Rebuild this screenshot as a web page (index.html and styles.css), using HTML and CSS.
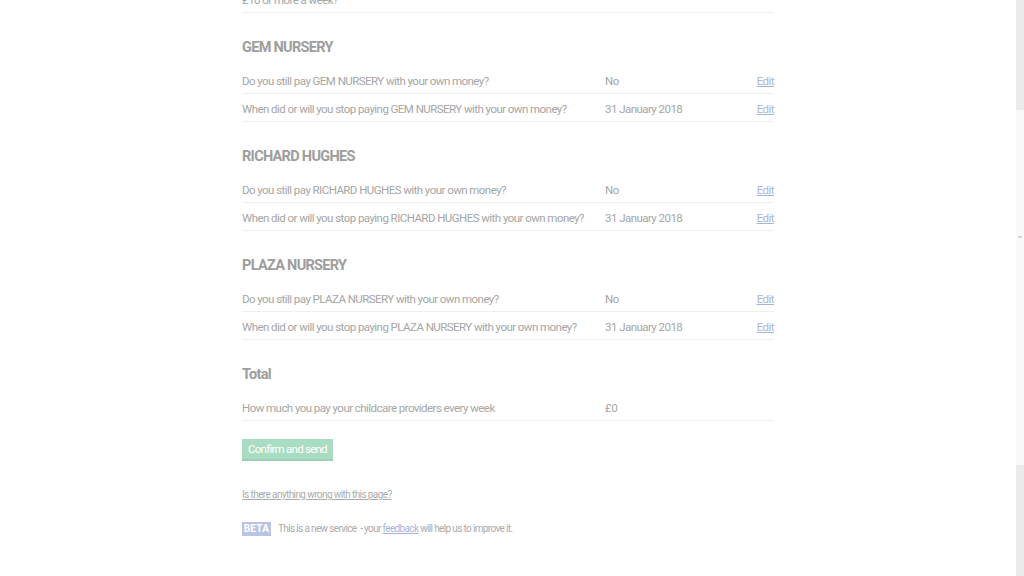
FILE: index.html
```html
<!DOCTYPE html>
<html lang="en">
<head>
<meta charset="utf-8">
<title>Check your answers</title>
<link rel="stylesheet" href="styles.css">
</head>
<body>
<div class="viewport">
  <main class="page">
    <dl class="list list-first">
      <div class="row row-cut">
        <dt class="key">£10 or more a week?</dt>
        <dd class="value"></dd>
        <dd class="action"></dd>
      </div>
    </dl>

    <section class="section">
      <h2 class="heading">GEM NURSERY</h2>
      <dl class="list">
        <div class="row">
          <dt class="key">Do you still pay GEM NURSERY with your own money?</dt>
          <dd class="value">No</dd>
          <dd class="action"><a href="#">Edit</a></dd>
        </div>
        <div class="row">
          <dt class="key">When did or will you stop paying GEM NURSERY with your own money?</dt>
          <dd class="value">31 January 2018</dd>
          <dd class="action"><a href="#">Edit</a></dd>
        </div>
      </dl>
    </section>

    <section class="section">
      <h2 class="heading">RICHARD HUGHES</h2>
      <dl class="list">
        <div class="row">
          <dt class="key">Do you still pay RICHARD HUGHES with your own money?</dt>
          <dd class="value">No</dd>
          <dd class="action"><a href="#">Edit</a></dd>
        </div>
        <div class="row">
          <dt class="key">When did or will you stop paying RICHARD HUGHES with your own money?</dt>
          <dd class="value">31 January 2018</dd>
          <dd class="action"><a href="#">Edit</a></dd>
        </div>
      </dl>
    </section>

    <section class="section">
      <h2 class="heading">PLAZA NURSERY</h2>
      <dl class="list">
        <div class="row">
          <dt class="key">Do you still pay PLAZA NURSERY with your own money?</dt>
          <dd class="value">No</dd>
          <dd class="action"><a href="#">Edit</a></dd>
        </div>
        <div class="row">
          <dt class="key">When did or will you stop paying PLAZA NURSERY with your own money?</dt>
          <dd class="value">31 January 2018</dd>
          <dd class="action"><a href="#">Edit</a></dd>
        </div>
      </dl>
    </section>

    <section class="section">
      <h2 class="heading heading-total">Total</h2>
      <dl class="list">
        <div class="row">
          <dt class="key">How much you pay your childcare providers every week</dt>
          <dd class="value">£0</dd>
          <dd class="action"></dd>
        </div>
      </dl>
    </section>

    <button class="button" type="button">Confirm and send</button>

    <p class="report"><a href="#">Is there anything wrong with this page?</a></p>

    <p class="phase"><strong class="tag">BETA</strong><span class="phase-text">This is a new service &nbsp;- your <a href="#">feedback</a> will help us to improve it.</span></p>
  </main>
</div>

<aside class="scrollbar" aria-hidden="true">
  <div class="sb-top"></div>
  <div class="sb-mid"><span class="sb-mark"></span></div>
  <div class="sb-bottom"></div>
</aside>
</body>
</html>
```

FILE: styles.css
```css
* { box-sizing: border-box; }

html, body {
  margin: 0;
  padding: 0;
  background: #ffffff;
}

body {
  font-family: Roboto, "Liberation Sans", sans-serif;
  color: #a6a6a6;
  overflow: hidden;
}

.viewport {
  width: 1016px;
}

.page {
  width: 532px;
  margin: 0 auto;
}

.list {
  margin: 0;
}

.list-first {
  margin-top: -15px;
}

.row {
  display: grid;
  grid-template-columns: 363px 1fr auto;
  align-items: center;
  height: 28px;
  border-bottom: 1px solid #efefef;
  font-size: 11.5px;
  line-height: 18px;
  letter-spacing: -0.55px;
  padding-top: 2px;
}

.key, .value, .action {
  margin: 0;
  font-weight: normal;
}

.action {
  text-align: right;
}

.action a {
  color: #a8b5da;
  text-decoration: underline;
}

.section {
  padding-top: 23px;
}

.heading {
  margin: 0 0 6px;
  font-size: 14.5px;
  line-height: 24px;
  font-weight: 700;
  letter-spacing: -0.7px;
  color: #9d9d9d;
}

.button {
  display: block;
  margin-top: 18px;
  height: 22px;
  padding: 0 6px;
  border: 0;
  border-bottom: 2px solid #9cd0b4;
  background: #aadcc2;
  color: #ffffff;
  font-family: inherit;
  font-size: 11.5px;
  line-height: 20px;
  letter-spacing: -0.75px;
}

.report {
  margin: 27px 0 0;
  font-size: 10px;
  line-height: 14px;
  letter-spacing: -0.6px;
}

.report a {
  color: #ababab;
  text-decoration: underline;
}

.phase {
  margin: 20px 0 0;
  display: flex;
  align-items: center;
  gap: 7px;
  font-size: 10px;
  line-height: 14px;
}

.tag {
  display: inline-block;
  width: 29px;
  text-align: center;
  background: #b9c5e2;
  color: #ffffff;
  font-weight: 700;
  letter-spacing: 0.3px;
  height: 14px;
  line-height: 14px;
}

.phase-text {
  color: #ababab;
  letter-spacing: -0.65px;
}

.phase-text a {
  color: #a8b5da;
}

.scrollbar {
  position: fixed;
  top: 0;
  right: 0;
  width: 8px;
  height: 576px;
  display: flex;
  flex-direction: column;
}

.sb-top {
  height: 110px;
  background: #ebebeb;
}

.sb-mid {
  flex: 1;
  background: #f9f9f9;
  position: relative;
}

.sb-mark {
  position: absolute;
  top: 126px;
  left: 2px;
  width: 4px;
  height: 2px;
  background: #d6d6d6;
}

.sb-bottom {
  height: 111px;
  background: #ebebeb;
}
```
